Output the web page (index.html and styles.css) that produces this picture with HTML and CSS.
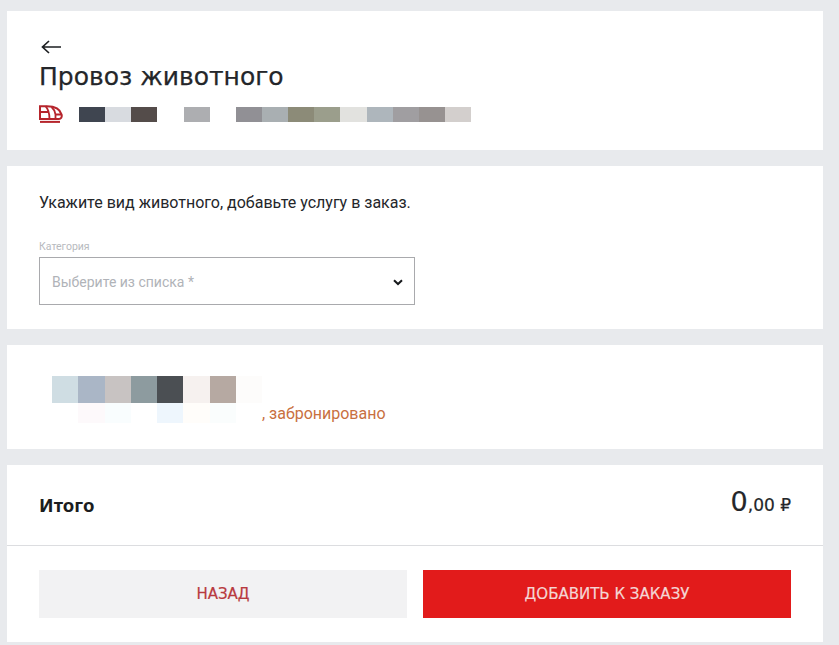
FILE: index.html
```html
<!DOCTYPE html>
<html lang="ru">
<head>
<meta charset="utf-8">
<title>Провоз животного</title>
<link rel="stylesheet" href="styles.css">
</head>
<body>
<main class="page">
  <section class="card head">
    <svg class="back" viewBox="0 0 20 14" width="20" height="14" aria-hidden="true"><path d="M20 7H1.5M8 1L1.5 7L8 13" fill="none" stroke="#1d1f22" stroke-width="1.7"/></svg>
    <h1 class="title">Провоз животного</h1>
    <div class="route">
      <svg class="train" viewBox="0 0 24 18" width="24" height="18" aria-hidden="true">
        <path d="M1 14V1.2H8C15 1.2 21 3.5 22.6 9.5C23.2 12 22 14 20 14H1Z" fill="none" stroke="#b6252c" stroke-width="2"/>
        <path d="M1 7H9.5M6.5 1.2C9.5 4.5 10.5 8.5 10.5 14M12.5 2C15.5 4.5 16 6.5 16.5 9.5H22.5M16.5 9.5V14" fill="none" stroke="#b6252c" stroke-width="1.8"/>
        <path d="M1 16.9H21" stroke="#b6252c" stroke-width="2"/>
      </svg>
      <div class="mosaic mosaic-route">
        <i class="c1"></i><i class="c2"></i><i class="c3"></i><i></i><i class="c4"></i><i></i><i class="c5"></i><i class="c6"></i><i class="c7"></i><i class="c8"></i><i class="c9"></i><i class="c10"></i><i class="c11"></i><i class="c12"></i><i class="c13"></i>
      </div>
    </div>
  </section>

  <section class="card form">
    <p class="lead">Укажите вид животного, добавьте услугу в заказ.</p>
    <div class="label">Категория</div>
    <div class="select">
      <span>Выберите из списка *</span>
      <svg viewBox="0 0 10 7" width="10" height="7" aria-hidden="true"><path d="M1 1.2L5 5L9 1.2" fill="none" stroke="#17191c" stroke-width="2"/></svg>
    </div>
  </section>

  <section class="card passenger">
    <div class="mosaic mosaic-name">
      <i class="n1"></i><i class="n2"></i><i class="n3"></i><i class="n4"></i><i class="n5"></i><i class="n6"></i><i class="n7"></i><i class="n8"></i>
    </div>
    <div class="status-row">
      <div class="mosaic mosaic-faint">
        <i></i><i class="f1"></i><i class="f2"></i><i></i><i class="f3"></i><i class="f4"></i><i class="f5"></i><i></i>
      </div>
      <span class="status">, забронировано</span>
    </div>
  </section>

  <section class="card total">
    <div class="sum">
      <strong class="sum-label">Итого</strong>
      <div class="amount"><span class="int">0</span><span class="frac">,00 ₽</span></div>
    </div>
    <div class="actions">
      <button class="btn btn-back" type="button">НАЗАД</button>
      <button class="btn btn-add" type="button">ДОБАВИТЬ К ЗАКАЗУ</button>
    </div>
  </section>
</main>
</body>
</html>
```
FILE: styles.css
```css
* { box-sizing: border-box; }
html, body { margin: 0; height: 100%; }
body {
  background: #e8eaed;
  font-family: "Noto Sans", Roboto, sans-serif;
  color: #1d1f22;
  overflow: hidden;
}
.page {
  display: flex;
  flex-direction: column;
  gap: 16px;
  padding: 11px 16px 0 7px;
}
.card { background: #fff; }

.head { height: 139px; padding: 29px 32px 0; display: flex; flex-direction: column; align-items: flex-start; }
.back { margin-left: 2px; display: block; }
.title {
  margin: 8px 0 0;
  font: 400 25px/30px "DejaVu Sans", sans-serif;
  -webkit-text-stroke: 0.25px #24262a;
  color: #24262a;
}
.route { display: flex; align-items: center; margin-top: 12px; height: 20px; }
.train { display: block; }
.mosaic { display: grid; grid-auto-flow: column; }
.mosaic-route { grid-auto-columns: 26.15px; height: 15px; margin-left: 16px; }
.c1 { background: #3f4550; } .c2 { background: #d8dbe0; } .c3 { background: #544c4a; }
.c4 { background: #adaeb1; } .c5 { background: #919095; } .c6 { background: #a9afb2; }
.c7 { background: #8c8b78; } .c8 { background: #9b9e8c; } .c9 { background: #e2e2df; }
.c10 { background: #aeb6bc; } .c11 { background: #a09ea1; } .c12 { background: #979291; }
.c13 { background: #d3cfcd; }

.form { height: 163px; padding: 28px 32px 0; }
.lead { margin: 0; font: 400 16px/18px Roboto, sans-serif; color: #24262a; }
.label { margin-top: 28px; font: 400 10.5px/14px Roboto, sans-serif; color: #b7babe; }
.select {
  margin-top: 3px;
  width: 376px;
  height: 48px;
  border: 1px solid #a9aaad;
  display: flex;
  align-items: center;
  justify-content: space-between;
  padding: 2px 11px 0 12px;
  font: 400 14px/18px Roboto, sans-serif;
  color: #b0b3b8;
}

.passenger { height: 104px; padding: 31px 32px 0 45px; }
.mosaic-name { grid-auto-columns: 26.25px; height: 27px; }
.n1 { background: #cfdde3; } .n2 { background: #aab6c6; } .n3 { background: #c8c3c2; }
.n4 { background: #8d9b9f; } .n5 { background: #4b4f53; } .n6 { background: #f6f1ef; }
.n7 { background: #b6a9a2; } .n8 { background: #fdfcfb; }
.status-row { display: flex; align-items: center; height: 20px; }
.mosaic-faint { grid-auto-columns: 26.25px; height: 20px; }
.f1 { background: #fdf9fb; } .f2 { background: #f9fdfe; } .f3 { background: #eef6fd; }
.f4 { background: #fffdfa; } .f5 { background: #fafdfd; }
.status { font: 400 16px/22px Roboto, sans-serif; color: #c8703f; padding-top: 2px; }

.total { height: 177px; }
.sum {
  height: 81px;
  border-bottom: 1px solid #dcdde0;
  display: flex;
  justify-content: space-between;
  align-items: center;
  padding: 0 32px;
}
.sum-label { font: 700 18.5px/22px "Noto Sans", sans-serif; color: #1b1d20; }
.amount { font-family: "DejaVu Sans", sans-serif; color: #24262a; margin-top: -8px; -webkit-text-stroke: 0.2px #24262a; }
.int { font-size: 27px; }
.frac { font-size: 17px; }
.actions { display: flex; gap: 16px; padding: 24px 32px 0; }
.btn {
  flex: 1;
  height: 48px;
  border: 0;
  padding: 0;
  font: 400 15px/18px "DejaVu Sans", sans-serif;
}
.btn-back { background: #f2f2f3; color: #b83a40; -webkit-text-stroke: 0.2px #b83a40; }
.btn-add { background: #e21b1b; color: #f4d6d4; -webkit-text-stroke: 0.2px #f4d6d4; }
```
